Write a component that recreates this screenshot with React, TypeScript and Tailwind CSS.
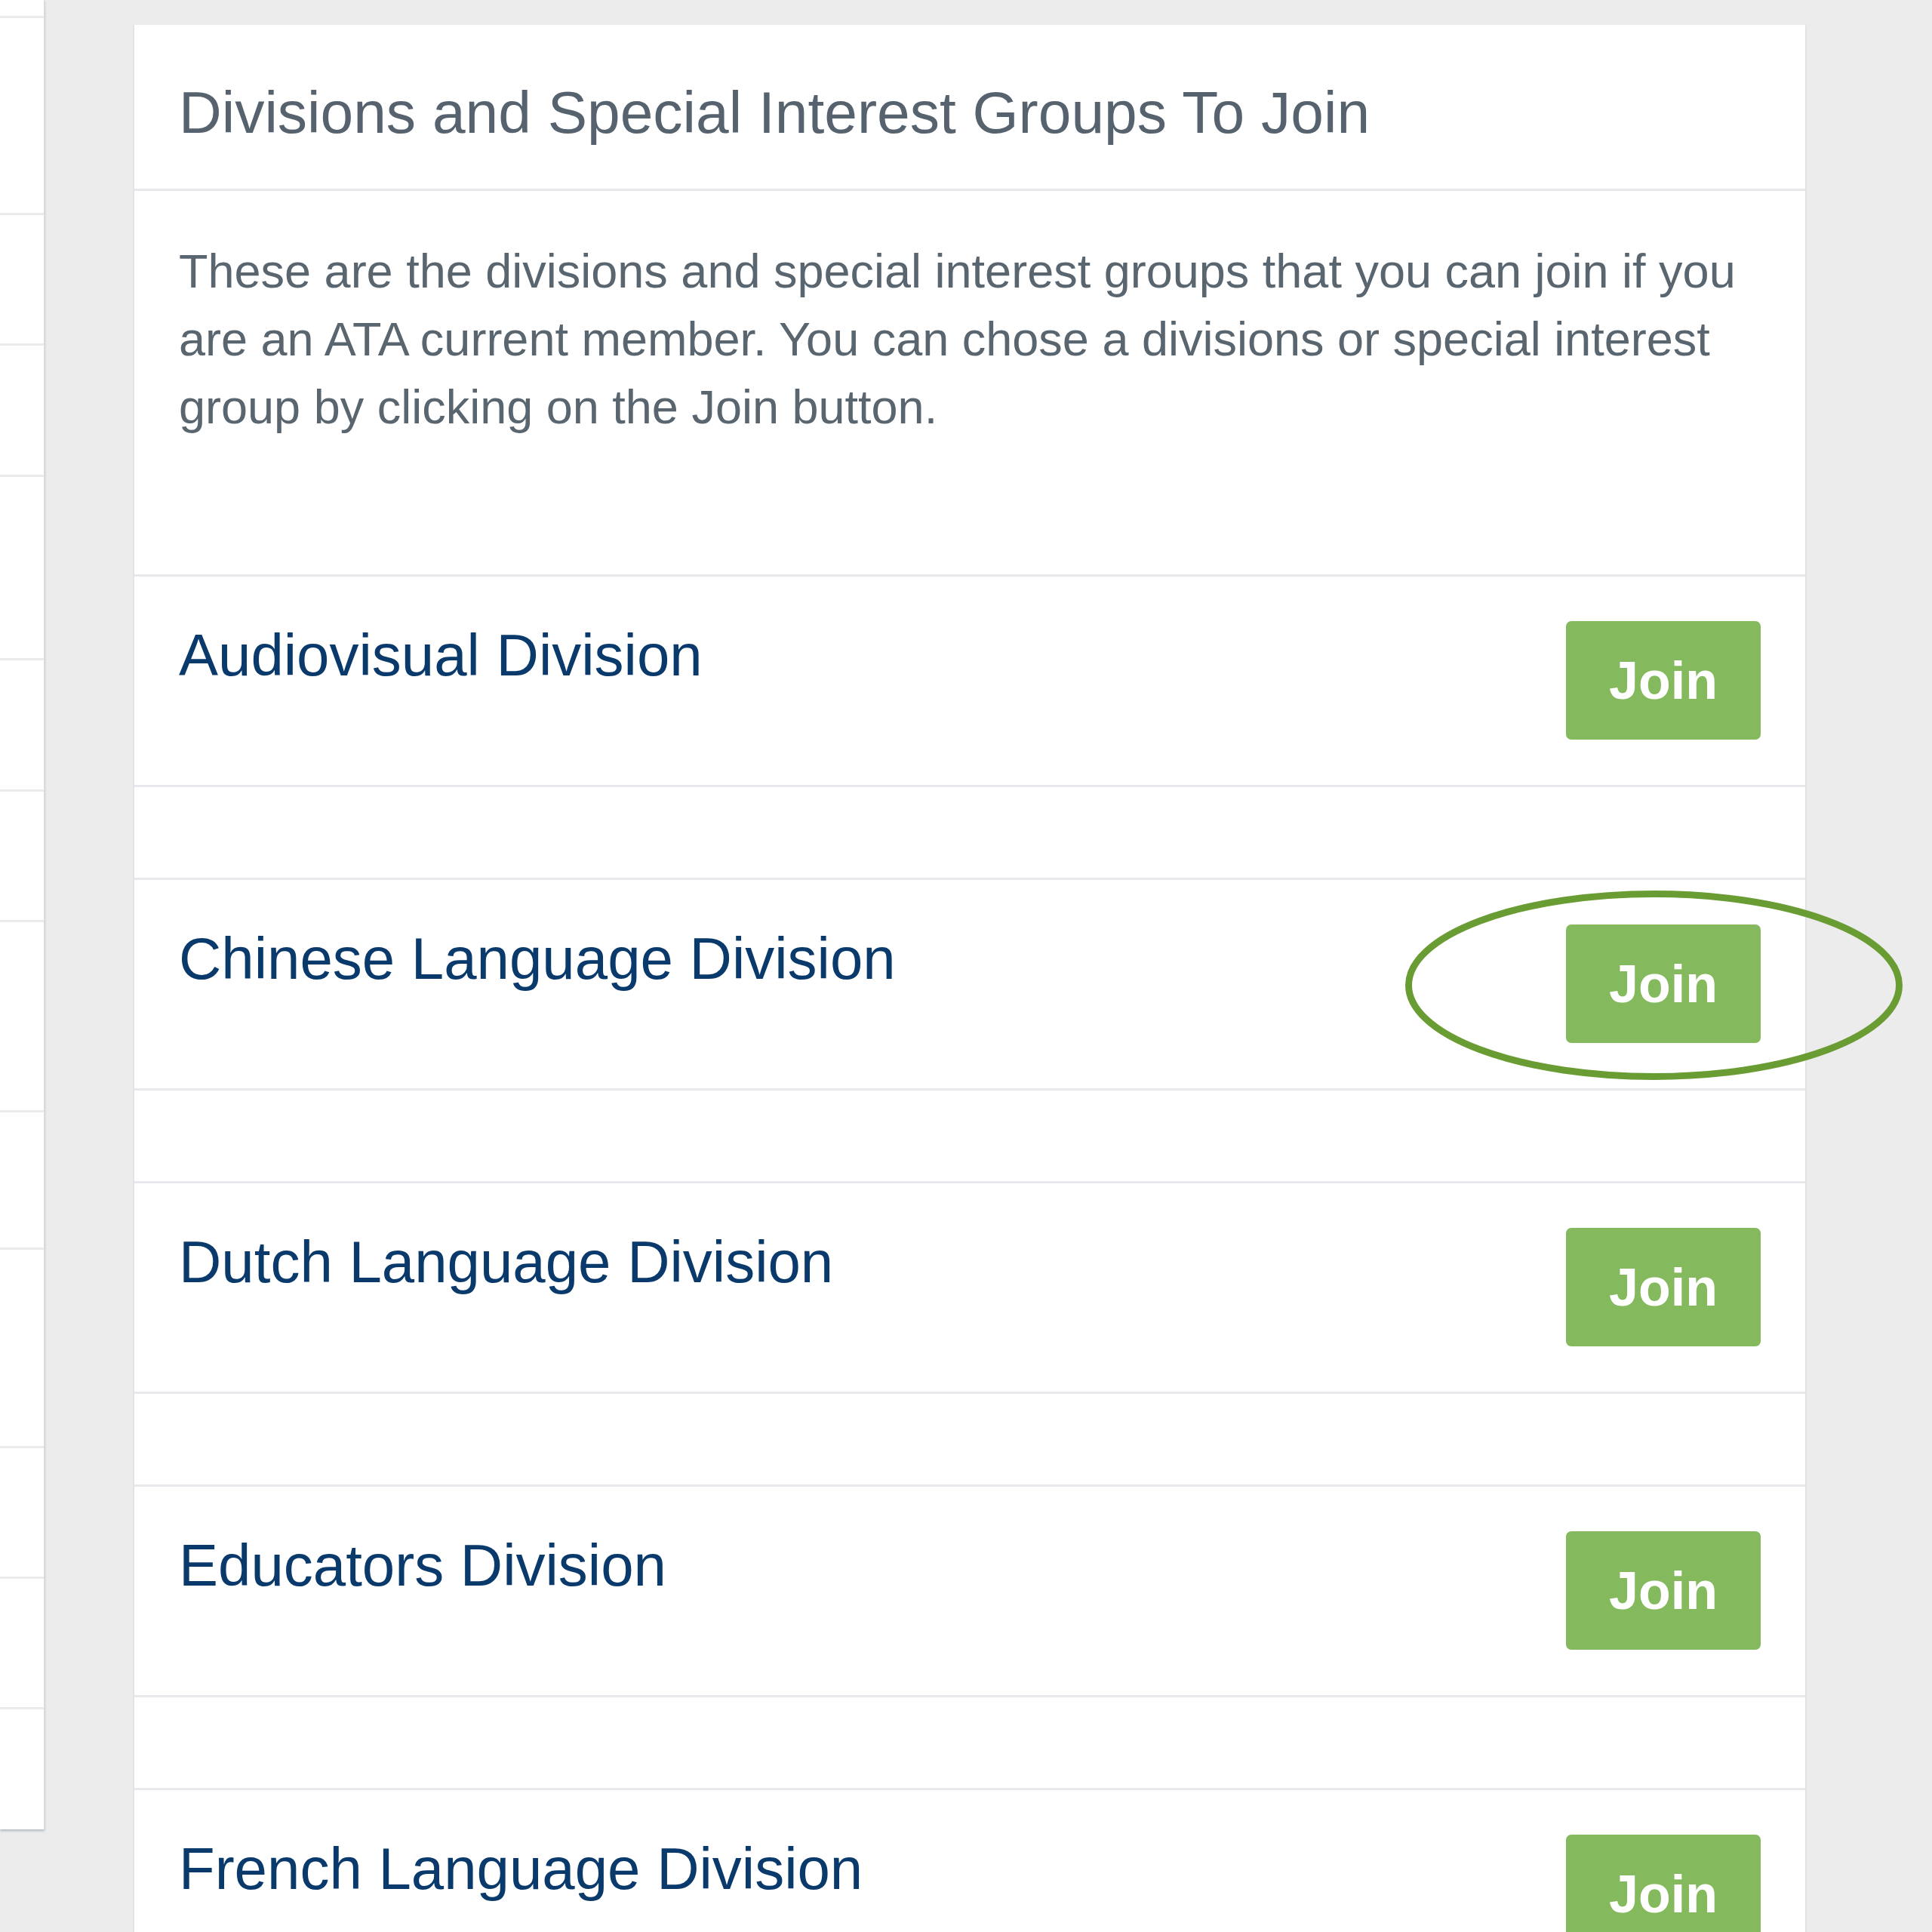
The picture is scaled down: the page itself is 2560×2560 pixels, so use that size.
const sidebarRows = [
  'h-[24px]',
  'h-[261px]',
  'h-[173px]',
  'h-[174px]',
  'h-[243px]',
  'h-[174px]',
  'h-[173px]',
  'h-[252px]',
  'h-[182px]',
  'h-[263px]',
  'h-[173px]',
  'h-[173px]',
]

const divisions = [
  'Audiovisual Division',
  'Chinese Language Division',
  'Dutch Language Division',
  'Educators Division',
  'French Language Division',
]

export default function App() {
  return (
    <div className="relative flex h-[2560px] w-[2560px] items-start overflow-hidden bg-[#ececec] font-['Liberation_Sans',Arial,sans-serif]">
      {/* clipped side menu */}
      <aside className="flex h-[2424px] w-[59px] shrink-0 flex-col border-r border-[#dcdcdc] bg-white shadow-[0_2px_3px_rgba(70,90,110,0.35)]">
        {sidebarRows.map((h, i) => (
          <div key={i} className={`${h} shrink-0 border-b-[3px] border-[#ebebeb]`} />
        ))}
      </aside>

      <section className="ml-[117px] mt-[33px] w-[2218px] shrink-0 border-x-2 border-[#e3e3e3] bg-white">
        <div className="border-b-[3px] border-[#e6e8eb] px-[59px] pb-[56px] pt-[71px]">
          <h2 className="text-[78.5px] leading-[90px] text-[#56636f]">
            Divisions and Special Interest Groups To Join
          </h2>
        </div>

        <div className="border-b-[3px] border-[#e6e8eb] px-[59px] pb-[177px] pt-[61px]">
          <p className="text-[63px] leading-[90px] text-[#59656f]">
            These are the divisions and special interest groups that you can join if you are an ATA
            current member. You can chose a divisions or special interest group by clicking on the
            Join button.
          </p>
        </div>

        {divisions.map((name) => (
          <div key={name}>
            <div className="flex items-start justify-between border-b-[3px] border-[#e8e9ec] px-[59px] pb-[60px] pt-[59px]">
              <span className="text-[78px] leading-[90px] text-[#0a3a6b]">{name}</span>
              <button className="flex h-[157px] w-[258px] items-center justify-center rounded-[7px] bg-[#84b95e] text-[70px] font-bold leading-none text-white">
                Join
              </button>
            </div>
            <div className="h-[123px] border-b-[3px] border-[#e8e9ec]" />
          </div>
        ))}
      </section>

      {/* hand-drawn highlight round the second Join button */}
      <svg
        className="absolute left-[1855px] top-[1174px] h-[263px] w-[673px]"
        viewBox="0 0 673 263"
        fill="none"
      >
        <ellipse cx="336.5" cy="131.5" rx="325" ry="121" stroke="#6a9c34" strokeWidth="9" />
      </svg>
    </div>
  )
}
